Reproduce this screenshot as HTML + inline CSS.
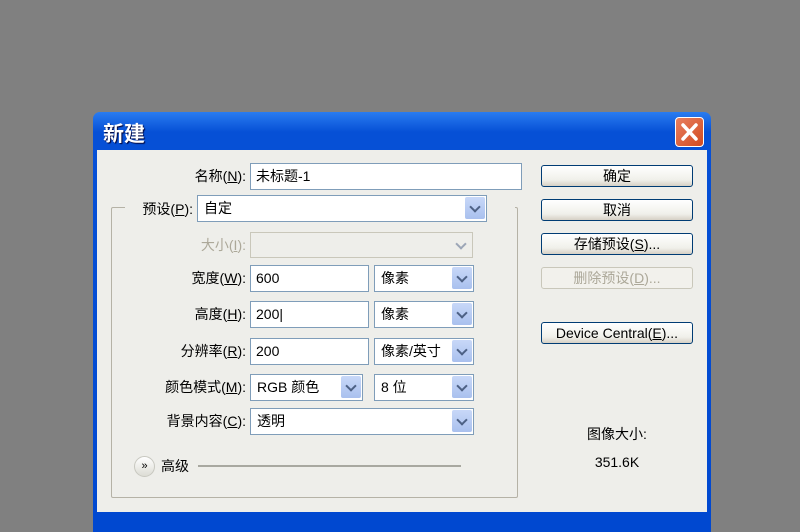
<!DOCTYPE html><html><head><meta charset="utf-8"><style>
*{margin:0;padding:0;box-sizing:border-box}
body{width:800px;height:520px;background:#808080;position:relative;overflow:hidden;font-family:"Liberation Sans","Noto Sans CJK SC",sans-serif;font-size:14px;color:#000}
.a{position:absolute}
#dlg{left:93px;top:112px;width:618px;height:420px;background:linear-gradient(#2a7cf0,#0650d6 20px,#0048d0);border-radius:7px 7px 0 0}
#body{left:97px;top:150px;width:610px;height:362px;background:#ece9d8;background:#eeeeea}
.ttl{left:103px;top:118px;color:#fff;font-size:21px;font-weight:bold;text-shadow:1px 1px 1px #003}
.close{left:675px;top:117px;width:29px;height:30px;border:1px solid #fff;border-radius:4px;background:linear-gradient(135deg,#e88060,#d24a20)}
.lbl{text-align:right;width:150px;line-height:26px}
.in{background:#fff;border:1px solid #7f9db9;line-height:24px;padding-left:5px}
.sel{background:#fff;border:1px solid #7f9db9;line-height:24px;padding-left:6px}
.arr{position:absolute;right:1px;top:1px;width:20px;height:22px;background:linear-gradient(#c8d8f8,#a9c0ee);border-radius:2px}
.arr:after{content:"";position:absolute;left:6px;top:6px;width:6px;height:6px;border-right:2px solid #4d6185;border-bottom:2px solid #4d6185;transform:rotate(45deg)}
.btn{left:541px;width:152px;height:22px;border:1px solid #003c74;border-radius:3px;background:linear-gradient(#fff,#f0f0ea 70%,#d6d0c5);text-align:center;line-height:20px}
u{text-decoration:underline}
</style></head><body>
<div id="dlg" class="a"></div>
<div id="body" class="a"></div>
<div class="a ttl">新建</div>
<div class="a close"><svg width="27" height="28" viewBox="0 0 27 28"><path d="M7 7L20 21M20 7L7 21" stroke="#fff" stroke-width="3.5" stroke-linecap="round"/></svg></div>

<div class="a" style="left:111px;top:207px;width:407px;height:291px;border:1px solid #b5b2a6;border-radius:2px"></div>
<div class="a" style="left:125px;top:200px;width:390px;height:14px;background:#eeeeea"></div>

<div class="a lbl" style="left:96px;top:163px">名称(<u>N</u>):</div>
<div class="a in" style="left:250px;top:163px;width:272px;height:27px">未标题-1</div>

<div class="a lbl" style="left:43px;top:196px">预设(<u>P</u>):</div>
<div class="a sel" style="left:197px;top:195px;width:290px;height:27px">自定<span class="arr"></span></div>

<div class="a lbl" style="left:96px;top:232px;color:#aca899">大小(<u>I</u>):</div>
<div class="a sel" style="left:250px;top:232px;width:223px;height:26px;background:#eeeeea;border-color:#c9c7ba"><span class="arr" style="background:#eeeeea;opacity:.5"></span></div>

<div class="a lbl" style="left:96px;top:265px">宽度(<u>W</u>):</div>
<div class="a in" style="left:250px;top:265px;width:119px;height:27px">600</div>
<div class="a sel" style="left:374px;top:265px;width:100px;height:27px">像素<span class="arr"></span></div>

<div class="a lbl" style="left:96px;top:301px">高度(<u>H</u>):</div>
<div class="a in" style="left:250px;top:301px;width:119px;height:27px">200|</div>
<div class="a sel" style="left:374px;top:301px;width:100px;height:27px">像素<span class="arr"></span></div>

<div class="a lbl" style="left:96px;top:338px">分辨率(<u>R</u>):</div>
<div class="a in" style="left:250px;top:338px;width:119px;height:27px">200</div>
<div class="a sel" style="left:374px;top:338px;width:100px;height:27px">像素/英寸<span class="arr"></span></div>

<div class="a lbl" style="left:96px;top:374px">颜色模式(<u>M</u>):</div>
<div class="a sel" style="left:250px;top:374px;width:113px;height:27px">RGB 颜色<span class="arr"></span></div>
<div class="a sel" style="left:374px;top:374px;width:100px;height:27px">8 位<span class="arr"></span></div>

<div class="a lbl" style="left:96px;top:408px">背景内容(<u>C</u>):</div>
<div class="a sel" style="left:250px;top:408px;width:224px;height:27px">透明<span class="arr"></span></div>

<div class="a" style="left:134px;top:456px;width:21px;height:21px;border-radius:50%;background:linear-gradient(#fff,#dcdcd4);border:1px solid #c8c8c0;font-size:11px;text-align:center;line-height:19px">»</div>
<div class="a" style="left:161px;top:455px;line-height:22px">高级</div>
<div class="a" style="left:198px;top:465px;width:263px;height:2px;background:#a8a8a0"></div>

<div class="a btn" style="top:165px">确定</div>
<div class="a btn" style="top:199px">取消</div>
<div class="a btn" style="top:233px">存储预设(<u>S</u>)...</div>
<div class="a btn" style="top:267px;border-color:#c9c7ba;color:#aca899;background:#f2f1ec">删除预设(<u>D</u>)...</div>
<div class="a btn" style="top:322px">Device Central(<u>E</u>)...</div>

<div class="a" style="left:560px;top:424px;width:114px;text-align:center">图像大小:</div>
<div class="a" style="left:560px;top:454px;width:114px;text-align:center">351.6K</div>
</body></html>
